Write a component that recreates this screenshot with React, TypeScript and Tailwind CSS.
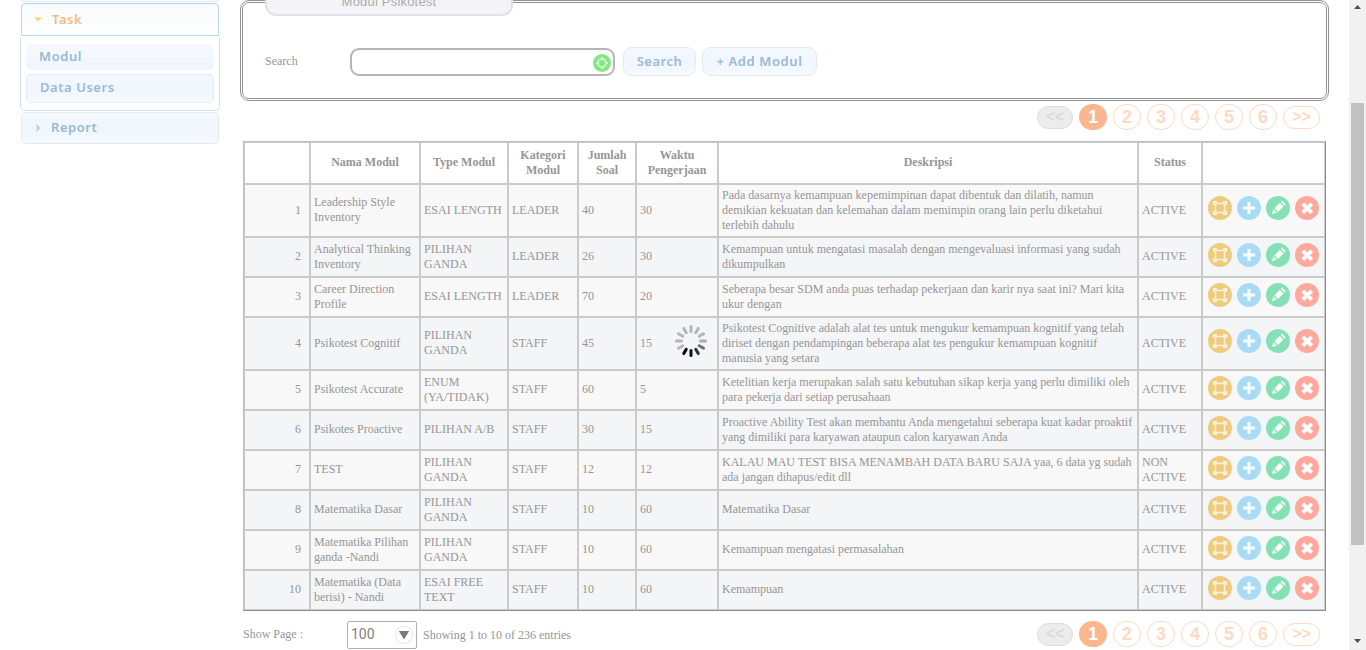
import React from "react";

type Row = {
  name: string[];
  type: string[];
  category: string;
  count: string;
  time: string;
  desc: string[];
  status: string[];
  tall?: boolean;
};

const rows: Row[] = [
  {
    name: ["Leadership Style", "Inventory"],
    type: ["ESAI LENGTH"],
    category: "LEADER",
    count: "40",
    time: "30",
    desc: [
      "Pada dasarnya kemampuan kepemimpinan dapat dibentuk dan dilatih, namun",
      "demikian kekuatan dan kelemahan dalam memimpin orang lain perlu diketahui",
      "terlebih dahulu",
    ],
    status: ["ACTIVE"],
    tall: true,
  },
  {
    name: ["Analytical Thinking", "Inventory"],
    type: ["PILIHAN", "GANDA"],
    category: "LEADER",
    count: "26",
    time: "30",
    desc: ["Kemampuan untuk mengatasi masalah dengan mengevaluasi informasi yang sudah", "dikumpulkan"],
    status: ["ACTIVE"],
  },
  {
    name: ["Career Direction", "Profile"],
    type: ["ESAI LENGTH"],
    category: "LEADER",
    count: "70",
    time: "20",
    desc: ["Seberapa besar SDM anda puas terhadap pekerjaan dan karir nya saat ini? Mari kita", "ukur dengan"],
    status: ["ACTIVE"],
  },
  {
    name: ["Psikotest Cognitif"],
    type: ["PILIHAN", "GANDA"],
    category: "STAFF",
    count: "45",
    time: "15",
    desc: [
      "Psikotest Cognitive adalah alat tes untuk mengukur kemampuan kognitif yang telah",
      "diriset dengan pendampingan beberapa alat tes pengukur kemampuan kognitif",
      "manusia yang setara",
    ],
    status: ["ACTIVE"],
    tall: true,
  },
  {
    name: ["Psikotest Accurate"],
    type: ["ENUM", "(YA/TIDAK)"],
    category: "STAFF",
    count: "60",
    time: "5",
    desc: ["Ketelitian kerja merupakan salah satu kebutuhan sikap kerja yang perlu dimiliki oleh", "para pekerja dari setiap perusahaan"],
    status: ["ACTIVE"],
  },
  {
    name: ["Psikotes Proactive"],
    type: ["PILIHAN A/B"],
    category: "STAFF",
    count: "30",
    time: "15",
    desc: ["Proactive Ability Test akan membantu Anda mengetahui seberapa kuat kadar proaktif", "yang dimiliki para karyawan ataupun calon karyawan Anda"],
    status: ["ACTIVE"],
  },
  {
    name: ["TEST"],
    type: ["PILIHAN", "GANDA"],
    category: "STAFF",
    count: "12",
    time: "12",
    desc: ["KALAU MAU TEST BISA MENAMBAH DATA BARU SAJA yaa, 6 data yg sudah", "ada jangan dihapus/edit dll"],
    status: ["NON", "ACTIVE"],
  },
  {
    name: ["Matematika Dasar"],
    type: ["PILIHAN", "GANDA"],
    category: "STAFF",
    count: "10",
    time: "60",
    desc: ["Matematika Dasar"],
    status: ["ACTIVE"],
  },
  {
    name: ["Matematika Pilihan", "ganda -Nandi"],
    type: ["PILIHAN", "GANDA"],
    category: "STAFF",
    count: "10",
    time: "60",
    desc: ["Kemampuan mengatasi permasalahan"],
    status: ["ACTIVE"],
  },
  {
    name: ["Matematika (Data", "berisi) - Nandi"],
    type: ["ESAI FREE", "TEXT"],
    category: "STAFF",
    count: "10",
    time: "60",
    desc: ["Kemampuan"],
    status: ["ACTIVE"],
  },
];

function Lines({ items }: { items: string[] }) {
  return (
    <>
      {items.map((t) => (
        <div key={t} className="whitespace-nowrap">
          {t}
        </div>
      ))}
    </>
  );
}

// An odd amount of free height is rounded upwards, so the text keeps to whole pixels.
function Cell({ items, tall }: { items: string[]; tall?: boolean }) {
  const odd = items.length % 2 === (tall ? 0 : 1);
  return (
    <td className={odd ? "px-[3px] pt-0 pb-px" : "px-[3px] py-0"}>
      <Lines items={items} />
    </td>
  );
}

function Actions({ tall }: { tall?: boolean }) {
  return (
    <div className={`flex gap-[5px] pl-[5px] ${tall ? "pb-[5px]" : "pb-1"}`}>
      <svg width="24" height="24" viewBox="0 0 24 24" fill="none">
        <circle cx="12" cy="12" r="12" fill="#efcb7e" />
        <path d="M7.500 7.500h9v9h-9z" stroke="#fbf1da" strokeWidth="1.500" />
        <path d="M5.700 9V5.700H9M15 5.700h3.300V9M18.300 15v3.300H15M9 18.300H5.700V15" stroke="#fffaf0" strokeWidth="1.500" strokeLinejoin="round" />
      </svg>
      <svg width="24" height="24" viewBox="0 0 24 24" fill="none">
        <circle cx="12" cy="12" r="12" fill="#a9dbf5" />
        <path d="M12 6v12M6 12h12" stroke="#fff" strokeWidth="3" strokeOpacity=".92" />
      </svg>
      <svg width="24" height="24" viewBox="0 0 24 24">
        <circle cx="12" cy="12" r="12" fill="#84e0b5" />
        <g fill="#fff" fillOpacity=".95">
          <path d="M6 18l1.300-4.800 3.500 3.500z" />
          <path d="M8.300 12.200l5.500-5.500 3.700 3.700-5.500 5.500z" />
          <path d="M14.700 5.800l1.300-1.400 3.800 3.800-1.400 1.300z" />
        </g>
      </svg>
      <svg width="24" height="24" viewBox="0 0 24 24" fill="none">
        <circle cx="12" cy="12" r="12" fill="#ffa99d" />
        <path d="M7.800 7.800l8.900 8.900M16.700 7.800l-8.900 8.900" stroke="#fff" strokeWidth="3.800" />
      </svg>
    </div>
  );
}

function Pagination() {
  return (
    <div className="flex h-[26px] items-center gap-1.5 font-['Liberation_Sans',Arial,sans-serif] text-[18px] font-bold leading-none text-[#fed9c4]">
      <div className="flex h-[23px] w-9 items-center justify-center rounded-full border border-[#dedede] bg-[#ececec] text-[16px] text-[#dadada]">&lt;&lt;</div>
      <div className="flex h-[26px] w-7 items-center justify-center rounded-[13px] bg-[#f9b690] text-white">1</div>
      {["2", "3", "4", "5", "6"].map((n) => (
        <div key={n} className="flex h-[26px] w-7 items-center justify-center rounded-[13px] border border-[#fed9c4]">
          {n}
        </div>
      ))}
      <div className="flex h-[23px] w-[37px] items-center justify-center rounded-full border border-[#fed9c4] text-[16px]">&gt;&gt;</div>
    </div>
  );
}

function Sidebar() {
  return (
    <nav className="w-[198px] shrink-0 ml-[21px] font-['Noto_Sans',Verdana,sans-serif] text-[13px] font-semibold tracking-[0.550px] text-[#9ab9d3]">
      <div className="h-0.5 rounded-b border-b border-x border-[#e2edf4] bg-[#f8fbfe]" />
      <div className="mt-px flex h-[33px] items-center rounded-t-[4px] border border-[#b7d8ee] bg-linear-to-b from-[#f8fafd] to-white pl-3 text-[#f3ba86]">
        <svg width="9" height="5" className="mr-[9px]">
          <path d="M0 .5h8L4 4.500z" fill="#fcd667" />
        </svg>
        Task
      </div>
      <div className="mt-px -mx-px flex h-[74px] flex-col rounded-b-[5px] border border-t-0 border-[#cfe3ef] px-[5px] pt-[7px]">
        <div className="h-[26px] rounded-[5px] bg-linear-to-b from-[#f5f9fd] from-50% to-[#f0f6fe] to-55% pl-[13px] leading-[25px]">Modul</div>
        <div className="mt-1 h-[29px] rounded-[5px] border border-[#e2ebf2] bg-linear-to-b from-[#f5f9fd] via-[#f0f6fe] to-[#f6fafe] pl-[13px] leading-[25px]">Data Users</div>
      </div>
      <div className="mt-px flex h-8 items-center rounded-[5px] border border-[#e2ebf2] bg-linear-to-b from-[#f5f9fd] via-[#f0f6fe] to-[#f6fafe] pl-[14px]">
        <svg width="5" height="8" className="mr-[10px]">
          <path d="M.5 0v8l4-4z" fill="#b4d3eb" />
        </svg>
        Report
      </div>
    </nav>
  );
}

function SearchPanel() {
  return (
    <section className="h-[101px] w-[1089px] shrink-0 rounded-[9px] border-[3px] border-double border-[#929292] pl-[22px]">
      <div className="-mt-[3px] h-4 w-[248px] overflow-hidden rounded-b-[11px] border-2 border-t-0 border-[#e2e2e4] bg-[#f4f4f8] text-center font-['Liberation_Sans',Arial,sans-serif] text-[13px] leading-[4px] tracking-[0.200px] text-[#ababab]">
        <div>Modul Psikotest</div>
      </div>
      <div className="mt-[31px] flex items-center">
        <label className="w-[85px] pb-0.5 text-[12px]">Search</label>
        <div className="flex h-7 w-[265px] items-center justify-end rounded-[9px] border-2 border-[#b5b5b5] pr-0.5">
          <svg width="18" height="18" viewBox="0 0 18 18" fill="none" className="mt-0.5">
            <circle cx="9" cy="9" r="9" fill="#82e982" />
            <circle cx="9" cy="9" r="4" stroke="#e9fbe7" strokeWidth="1.500" />
            <path d="M9 3v2M9 13v2M3 9h2M13 9h2" stroke="#e9fbe7" strokeWidth="1.500" />
          </svg>
        </div>
        <div className="ml-2 flex h-[29px] w-[73px] items-center justify-center rounded-[9px] border border-[#e0ebf3] bg-linear-to-b from-[#f5f9fd] via-[#f0f6fe] to-[#f6fafe] font-['Noto_Sans',Verdana,sans-serif] text-[13px] font-semibold tracking-[0.500px] text-[#9ab9d3]">Search</div>
        <div className="ml-1.5 flex h-[29px] w-[115px] items-center justify-center rounded-[9px] border border-[#e0ebf3] bg-linear-to-b from-[#f5f9fd] via-[#f0f6fe] to-[#f6fafe] font-['Noto_Sans',Verdana,sans-serif] text-[13px] font-semibold tracking-[0.600px] text-[#9ab9d3]">+ Add Modul</div>
      </div>
    </section>
  );
}

function ModuleTable() {
  return (
    <div className="h-[470px] w-[1083px] shrink-0 border border-t-[#bdbdbd] border-l-[#bdbdbd] border-r-[#8e8e8e] border-b-[#8e8e8e]">
      <table className="w-[1081px] table-fixed border-separate border-spacing-0 text-[12px] leading-[15px] [&_td]:border [&_td]:border-[#cacaca] [&_th]:border [&_th]:border-[#cacaca] [&_th]:px-0 [&_th]:pt-0">
        <colgroup>
          <col className="w-[66px]" />
          <col className="w-[110px]" />
          <col className="w-[88px]" />
          <col className="w-[70px]" />
          <col className="w-[58px]" />
          <col className="w-[82px]" />
          <col className="w-[420px]" />
          <col className="w-[64px]" />
          <col className="w-[123px]" />
        </colgroup>
        <thead>
          <tr className="h-[42px]">
            <th />
            <th className="pb-px">Nama Modul</th>
            <th className="pb-px">Type Modul</th>
            <th className="pb-0"><Lines items={["Kategori", "Modul"]} /></th>
            <th className="pb-0"><Lines items={["Jumlah", "Soal"]} /></th>
            <th className="pb-0"><Lines items={["Waktu", "Pengerjaan"]} /></th>
            <th className="pb-px">Deskripsi</th>
            <th className="pb-px">Status</th>
            <th />
          </tr>
        </thead>
        <tbody>
          {rows.map((r, i) => (
            <tr key={i} className={`${r.tall ? "h-[53px]" : "h-10"} ${i % 2 ? "bg-[#f3f5f7]" : "bg-[#f8f8f8]"}`}>
              <td className={`pt-0 pl-0 pr-2 text-right ${r.tall ? "pb-0" : "pb-px"}`}>{i + 1}</td>
              <Cell items={r.name} tall={r.tall} />
              <Cell items={r.type} tall={r.tall} />
              <Cell items={[r.category]} tall={r.tall} />
              <Cell items={[r.count]} tall={r.tall} />
              <Cell items={[r.time]} tall={r.tall} />
              <Cell items={r.desc} tall={r.tall} />
              <Cell items={r.status} tall={r.tall} />
              <td className="p-0"><Actions tall={r.tall} /></td>
            </tr>
          ))}
        </tbody>
      </table>
    </div>
  );
}

function Spinner() {
  const shades = ["#b5b5b5", "#b5b5b5", "#b5b5b5", "#acacac", "#707070", "#303030", "#111111", "#000000", "#b5b5b5", "#b5b5b5", "#b5b5b5", "#b5b5b5"];
  return (
    <svg width="32" height="32" viewBox="0 0 32 32" className="absolute left-[675px] top-[325px]">
      {shades.map((c, i) => (
        <line key={i} x1="16" y1="1.500" x2="16" y2="6.500" stroke={c} strokeWidth="3" strokeLinecap="round" transform={`rotate(${i * 30} 16 16)`} />
      ))}
    </svg>
  );
}

function Scrollbar() {
  return (
    <div className="flex w-[17px] shrink-0 flex-col items-center bg-[#f1f1f1]">
      <svg width="17" height="103" className="shrink-0">
        <path d="M5 9h7L8.500 5z" fill="#505050" />
      </svg>
      <div className="h-[442px] w-[13px] bg-[#c1c1c1]" />
      <svg width="17" height="105" className="shrink-0">
        <path d="M5 94h7l-3.500 4z" fill="#505050" />
      </svg>
    </div>
  );
}

export default function App() {
  return (
    <div className="relative flex h-[650px] w-[1366px] overflow-hidden bg-white font-['Liberation_Serif','Times_New_Roman',serif] text-[12px] text-[#969696]">
      <Sidebar />
      <main className="ml-[21px] flex w-[1109px] shrink-0 flex-col">
        <SearchPanel />
        <div className="mt-[3px] flex justify-end pr-[29px]">
          <Pagination />
        </div>
        <div className="ml-[3px] mt-[11px]">
          <ModuleTable />
        </div>
        <div className="mt-[10px] flex h-7 items-center pl-[3px] pr-[29px]">
          <span className="w-[104px] pb-0.5">Show Page :</span>
          <div className="flex h-7 w-[70px] items-center justify-between rounded-[2px] border border-[#b0b0b0] pl-[3px] pr-[3px] font-['Roboto',sans-serif] text-[14px] text-[#808080]">
            <span className="pb-px">100</span>
            <svg width="18" height="18" viewBox="0 0 18 18">
              <circle cx="9" cy="9" r="8.500" fill="#fff" stroke="#e6e6e6" />
              <path d="M3.800 5h10.400L9 13.500z" fill="#7b7b7b" />
            </svg>
          </div>
          <span className="ml-1.5 mr-auto">Showing 1 to 10 of 236 entries</span>
          <div className="pb-0.5">
            <Pagination />
          </div>
        </div>
      </main>
      <Scrollbar />
      <Spinner />
    </div>
  );
}
